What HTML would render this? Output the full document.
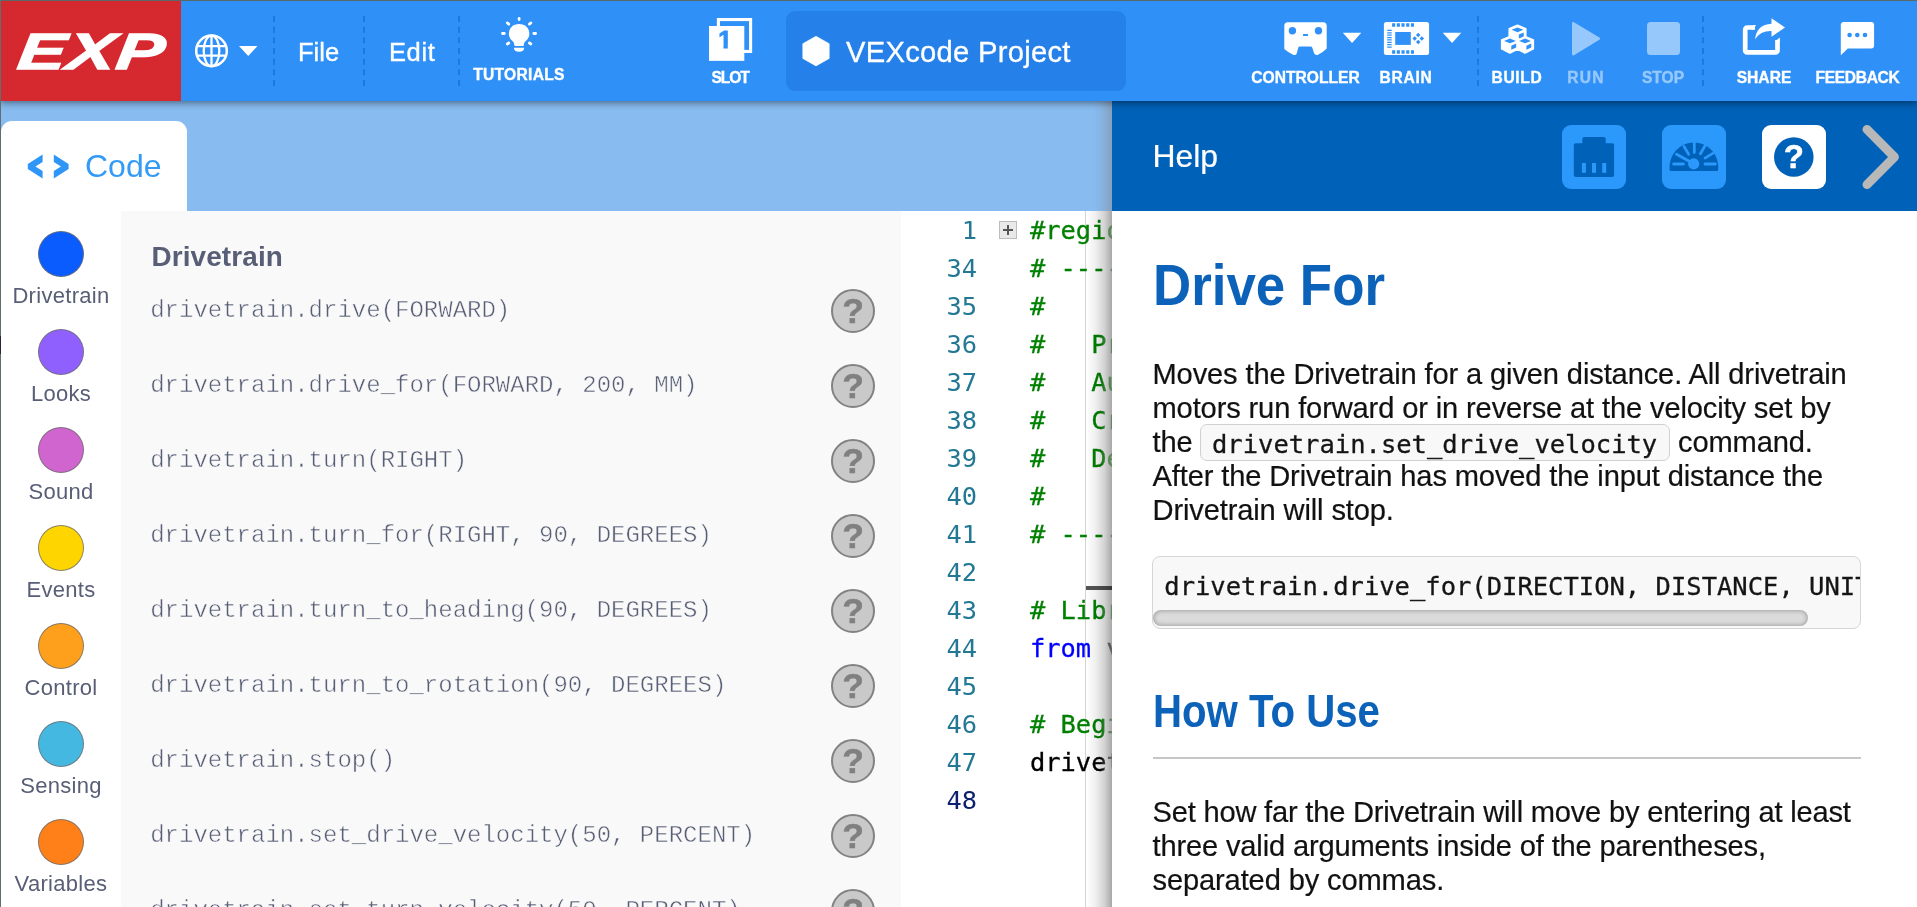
<!DOCTYPE html>
<html lang="en">
<head>
<meta charset="utf-8">
<title>VEXcode EXP</title>
<style>
*{box-sizing:border-box;margin:0;padding:0}
html,body{width:1917px;height:907px;overflow:hidden;background:#fff}
body{font-family:"Liberation Sans",sans-serif;position:relative}
#app{position:absolute;left:0;top:0;width:1917px;height:907px;overflow:hidden;will-change:transform}
.abs{position:absolute}
/* ---------- header ---------- */
#band{left:0;top:101px;width:1917px;height:110px;background:#88bcf0}
#header{left:0;top:0;width:1917px;height:101px;background:#2f91f7;box-shadow:0 2px 7px rgba(0,0,0,.45);z-index:20}
#logo{left:0;top:0;width:181px;height:101px;background:#d6282f}
.sep{width:0;top:16px;height:70px;border-left:2px dashed #1c79e4}
.hlabel{color:#fff;font-weight:bold;font-size:15.6px;white-space:nowrap;text-align:center;line-height:16px;margin-top:.5px;-webkit-text-stroke:.35px #fff}
.hmenu{-webkit-text-stroke-width:.35px;color:#fff;font-size:25.5px;white-space:nowrap;line-height:30px;margin-top:1px}
.dim{opacity:.5}
#proj{left:786px;top:11px;width:340px;height:80px;border-radius:9px;background:#2580ea}
#projname{-webkit-text-stroke-width:.3px;left:846px;top:34.700px;color:#fff;font-size:29.2px;line-height:34px;white-space:nowrap;letter-spacing:.27px}
/* ---------- left: tab, categories, flyout ---------- */
#tab{left:1px;top:121px;width:186px;height:100px;background:#fff;border-radius:11px 11px 0 0}
#tabtxt{left:85px;top:148px;color:#339bf5;font-size:32px;line-height:36px}
#cats{left:0px;top:211px;width:120px;height:700px;background:#fff}
.cat{left:0;width:122px;text-align:center}
.dot{width:46px;height:46px;border-radius:50%;border:1px solid rgba(110,110,110,.8);margin:0 auto}
.catl{color:#575e75;font-size:22px;line-height:24px;margin-top:7px;white-space:nowrap;letter-spacing:.3px}
#fly{left:121px;top:211px;width:780px;height:700px;background:#f9f9f9}
#flyh{left:151.500px;top:240px;color:#575e75;font-weight:bold;font-size:27.9px;line-height:34px;letter-spacing:.12px}
.cmd{left:150.200px;font-family:"Liberation Mono",monospace;font-size:24px;line-height:30px;color:#575e75;-webkit-text-stroke:.5px #f9f9f9;white-space:pre}
.q{left:831px;width:44px;height:44px;border-radius:50%;background:#c9c9c9;border:2.5px solid #828282;color:#808080;font-weight:bold;font-size:35.5px;line-height:41px;text-align:center;-webkit-text-stroke:.5px #808080}
/* ---------- editor ---------- */
#ed{left:901px;top:211px;width:212px;height:700px;background:#fff;overflow:hidden}
.ln{left:0;width:76px;text-align:right;font-family:"DejaVu Sans Mono",monospace;font-size:25.4px;line-height:38px;color:#237893;white-space:pre}
.cl{left:129px;font-family:"DejaVu Sans Mono",monospace;font-size:25.4px;line-height:38px;color:#000;white-space:pre;-webkit-text-stroke-width:.3px}
.cm{color:#008000}.kw{color:#0000ff}
/* ---------- help ---------- */
#helpshadow{left:1086px;top:211px;width:26px;height:700px;background:linear-gradient(to right,rgba(0,0,0,0),rgba(0,0,0,.06) 35%,rgba(0,0,0,.17) 70%,rgba(0,0,0,.34))}
#help{left:1112px;top:101px;width:805px;height:810px;background:#fff}
#hh{left:0;top:0;width:805px;height:110px;background:#0061b8}
#hht{-webkit-text-stroke-width:.2px;left:40.5px;top:35.500px;color:#fff;font-size:31.9px;line-height:38px}
.hb{top:24px;width:64px;height:64px;border-radius:9px;background:#2b99fc}
.h1{color:#0b62b8;font-weight:bold;white-space:nowrap;transform-origin:0 50%}
.p{left:40.5px;color:#111;-webkit-text-stroke-width:.2px;font-size:29.1px;line-height:34px;white-space:nowrap;letter-spacing:-.135px}
code{font-family:"DejaVu Sans Mono",monospace;-webkit-text-stroke-width:.3px}
</style>
</head>
<body>
<div id="app">
<div class="abs" id="band"></div>

<!-- tab + categories + flyout -->
<div class="abs" id="tab"></div>
<svg class="abs" style="left:25.5px;top:151px" width="46" height="32" viewBox="24 150 46 32" fill="#2f96f8"><path d="M40.600 153.600v7.300l-7.200 4.600 7.200 4.600v7.300l-14.800-9.400v-5z"/><path d="M51.800 153.600v7.300l7.200 4.600-7.200 4.600v7.300l14.800-9.400v-5z"/></svg>
<div class="abs" id="tabtxt">Code</div>
<div class="abs" id="cats">
<div class="abs cat" style="top:20px"><div class="dot" style="background:#0b5cff"></div><div class="catl">Drivetrain</div></div>
<div class="abs cat" style="top:118px"><div class="dot" style="background:#9060ff"></div><div class="catl">Looks</div></div>
<div class="abs cat" style="top:216px"><div class="dot" style="background:#d065cf"></div><div class="catl">Sound</div></div>
<div class="abs cat" style="top:314px"><div class="dot" style="background:#ffd500"></div><div class="catl">Events</div></div>
<div class="abs cat" style="top:412px"><div class="dot" style="background:#ffa01c"></div><div class="catl">Control</div></div>
<div class="abs cat" style="top:510px"><div class="dot" style="background:#45b8e2"></div><div class="catl">Sensing</div></div>
<div class="abs cat" style="top:608px"><div class="dot" style="background:#ff8019"></div><div class="catl">Variables</div></div>
</div>
<div class="abs" id="fly"></div>
<div class="abs" id="flyh">Drivetrain</div>
<div class="abs cmd" style="top:296px">drivetrain.drive(FORWARD)</div><div class="abs q" style="top:289px">?</div>
<div class="abs cmd" style="top:371px">drivetrain.drive_for(FORWARD, 200, MM)</div><div class="abs q" style="top:364px">?</div>
<div class="abs cmd" style="top:446px">drivetrain.turn(RIGHT)</div><div class="abs q" style="top:439px">?</div>
<div class="abs cmd" style="top:521px">drivetrain.turn_for(RIGHT, 90, DEGREES)</div><div class="abs q" style="top:514px">?</div>
<div class="abs cmd" style="top:596px">drivetrain.turn_to_heading(90, DEGREES)</div><div class="abs q" style="top:589px">?</div>
<div class="abs cmd" style="top:671px">drivetrain.turn_to_rotation(90, DEGREES)</div><div class="abs q" style="top:664px">?</div>
<div class="abs cmd" style="top:746px">drivetrain.stop()</div><div class="abs q" style="top:739px">?</div>
<div class="abs cmd" style="top:821px">drivetrain.set_drive_velocity(50, PERCENT)</div><div class="abs q" style="top:814px">?</div>
<div class="abs cmd" style="top:896px">drivetrain.set_turn_velocity(50, PERCENT)</div><div class="abs q" style="top:889px">?</div>

<div class="abs" id="ed">
<div class="abs" style="left:184.300px;top:0;width:1.200px;height:700px;background:#d4d4d4"></div>
<div class="abs ln" style="top:0px">1</div><div class="abs cl" style="top:0px"><span class="cm">#region VEXcode Generated Robot Configuration</span></div>
<div class="abs ln" style="top:38px">34</div><div class="abs cl" style="top:38px"><span class="cm"># ------------------------------------------</span></div>
<div class="abs ln" style="top:76px">35</div><div class="abs cl" style="top:76px"><span class="cm">#</span></div>
<div class="abs ln" style="top:114px">36</div><div class="abs cl" style="top:114px"><span class="cm">#   Project:      VEXcode Project</span></div>
<div class="abs ln" style="top:152px">37</div><div class="abs cl" style="top:152px"><span class="cm">#   Author:       VEX</span></div>
<div class="abs ln" style="top:190px">38</div><div class="abs cl" style="top:190px"><span class="cm">#   Created:</span></div>
<div class="abs ln" style="top:228px">39</div><div class="abs cl" style="top:228px"><span class="cm">#   Description:  VEXcode EXP Python Project</span></div>
<div class="abs ln" style="top:266px">40</div><div class="abs cl" style="top:266px"><span class="cm">#</span></div>
<div class="abs ln" style="top:304px">41</div><div class="abs cl" style="top:304px"><span class="cm"># ------------------------------------------</span></div>
<div class="abs ln" style="top:342px">42</div><div class="abs cl" style="top:342px"></div>
<div class="abs ln" style="top:380px">43</div><div class="abs cl" style="top:380px"><span class="cm"># Library imports</span></div>
<div class="abs ln" style="top:418px">44</div><div class="abs cl" style="top:418px"><span class="kw">from</span> vex <span class="kw">import</span> *</div>
<div class="abs ln" style="top:456px">45</div><div class="abs cl" style="top:456px"></div>
<div class="abs ln" style="top:494px">46</div><div class="abs cl" style="top:494px"><span class="cm"># Begin project code</span></div>
<div class="abs ln" style="top:532px">47</div><div class="abs cl" style="top:532px">drivetrain.drive_for(FORWARD, 200, MM)</div>
<div class="abs ln" style="top:570px;color:#0b216f">48</div><div class="abs cl" style="top:570px"></div>
<div class="abs" style="left:98px;top:10px;width:18px;height:18px;border:1.500px solid #bcbcbc;background:#e9e9e9"></div><div class="abs" style="left:102px;top:18.200px;width:10px;height:1.600px;background:#555"></div><div class="abs" style="left:106.200px;top:14px;width:1.600px;height:10px;background:#555"></div>
<div class="abs" style="left:185px;top:375px;width:30px;height:4px;background:#555"></div>
</div>
<div class="abs" style="left:1086px;top:211px;width:26px;height:700px;background:linear-gradient(to right,rgba(255,255,255,0) 55%,rgba(255,255,255,.6))"></div>
<div class="abs" style="left:1086px;top:586px;width:26px;height:4px;background:#555"></div>
<div class="abs" id="helpshadow"></div>
<div class="abs" style="left:1094px;top:101px;width:18px;height:110px;background:linear-gradient(to right,rgba(128,128,128,0),rgba(128,128,128,.12) 40%,rgba(128,128,128,.46))"></div>
<div class="abs" id="help">
<div class="abs" id="hh"><div class="abs" id="hht">Help</div>
  <div class="abs hb" style="left:450px">
    <svg class="abs" style="left:0;top:0" width="64" height="64" viewBox="1562 125 64 64" fill="#0061b8"><rect x="1582.300" y="137" width="23.400" height="10" rx="2"/><rect x="1573.800" y="143.300" width="40.300" height="33.600" rx="2"/><g fill="#2b99fc"><rect x="1581.900" y="163" width="4" height="9.800"/><rect x="1592" y="163" width="4" height="9.800"/><rect x="1602.200" y="163" width="4" height="9.800"/></g></svg>
  </div>
  <div class="abs hb" style="left:550px">
    <svg class="abs" style="left:0;top:0" width="64" height="64" viewBox="1662 125 64 64"><path d="M1671 171.100q-1.200 0-1.400-1.400a24.400 25 0 1 1 48.600 0q-.2 1.400-1.400 1.400z" fill="#0061b8"/><g stroke="#2b99fc" stroke-width="2.800" stroke-linecap="round" fill="none"><path d="M1694.300 142.300v10.200M1684 146.400l4.700 8M1705.200 145.500l-4.800 8.200M1712.800 153.400l-7.800 4.700M1673.600 164h9.800M1705 164h10.400"/><path d="M1676.600 154.200l17 9.600" stroke-width="3"/></g><circle cx="1693.700" cy="163.900" r="5.600" fill="#2b99fc"/></svg>
  </div>
  <div class="abs hb" style="left:650px;background:#fff">
    <svg class="abs" style="left:0;top:0" width="64" height="64" viewBox="1762 125 64 64"><circle cx="1793.800" cy="157" r="19.800" fill="#0061b8"/><text x="1793.900" y="168.300" text-anchor="middle" font-family="Liberation Sans, sans-serif" font-weight="bold" font-size="33" fill="#fff" stroke="#fff" stroke-width=".5">?</text></svg>
  </div>
  <svg class="abs" style="left:740px;top:14px" width="60" height="84" viewBox="1852 115 60 84"><path d="M1867 129.400l27.400 27.600-27.400 27.600" fill="none" stroke="#b8b8b8" stroke-width="9" stroke-linecap="round" stroke-linejoin="round"/></svg>
</div>
<div class="abs h1" id="t1" style="left:40.7px;top:151px;font-size:57.500px;line-height:66px;transform:scaleX(.919)">Drive For</div>
<div class="abs p" id="p1" style="top:256px">Moves the Drivetrain for a given distance. All drivetrain</div>
<div class="abs p" id="p2" style="top:290px">motors run forward or in reverse at the velocity set by</div>
<div class="abs p" id="p3" style="top:324px">the</div>
<div class="abs" id="ic" style="left:88.400px;top:323.400px;width:469.600px;height:36.300px;border:1.700px solid #d0d0d0;border-radius:7px;background:#f8f8f8"></div>
<div class="abs" id="ict" style="left:100px;top:326px;font-size:25.500px;line-height:35px;color:#151515;white-space:pre"><code>drivetrain.set_drive_velocity</code></div>
<div class="abs p" id="p3b" style="top:324px;left:566px">command.</div>
<div class="abs p" id="p4" style="top:358px">After the Drivetrain has moved the input distance the</div>
<div class="abs p" id="p5" style="top:392px">Drivetrain will stop.</div>
<div class="abs" id="cb" style="left:40px;top:455px;width:709px;height:73px;border:1.700px solid #d6d6d6;border-radius:8px;background:#f8f8f8;overflow:hidden">
  <div class="abs" id="cbt" style="left:11.300px;top:11.500px;font-size:25.500px;line-height:34px;color:#151515;white-space:pre"><code>drivetrain.drive_for(DIRECTION, DISTANCE, UNITS)</code></div>
  <div class="abs" style="left:.300px;top:53.300px;width:655px;height:15.700px;border-radius:8px;background:#dbdbdb;box-shadow:inset 0 0 4px 1px rgba(0,0,0,.26)"></div>
</div>
<div class="abs h1" id="t2" style="left:40.6px;top:583.5px;font-size:45.500px;line-height:54px;transform:scaleX(.883)">How To Use</div>
<div class="abs" style="left:41px;top:656px;width:708px;height:2px;background:#c6c6c6"></div>
<div class="abs p" id="p6" style="top:694px;letter-spacing:-.205px">Set how far the Drivetrain will move by entering at least</div>
<div class="abs p" id="p7" style="top:728px;letter-spacing:-.16px">three valid arguments inside of the parentheses,</div>
<div class="abs p" id="p8" style="top:762px">separated by commas.</div>
</div>

<div class="abs" style="left:0;top:0;width:1917px;height:1px;background:#5b6868;z-index:40"></div>
<div class="abs" style="left:0;top:0;width:1.100px;height:907px;background:#606e6d;z-index:40"></div>
<div class="abs" style="left:0;top:336px;width:1px;height:18px;background:#26263a;z-index:41"></div>
<div class="abs" id="header">
  <div class="abs" id="logo">
    <svg class="abs" style="left:0;top:0" width="181" height="101" viewBox="0 0 181 101"><text x="0" y="0" transform="translate(15.900,69) skewX(-7) scale(1.418,1)" font-family="Liberation Sans, sans-serif" font-weight="bold" font-style="italic" font-size="51" fill="#fff" stroke="#fff" stroke-width="1.300" letter-spacing=".8">EXP</text></svg>
  </div>
  <!-- globe -->
  <svg class="abs" style="left:192px;top:32px" width="70" height="38" viewBox="192 32 70 38" fill="none" stroke="#fff" stroke-width="2.500">
    <circle cx="211.500" cy="50.900" r="15.300"/>
    <ellipse cx="211.500" cy="50.900" rx="7.800" ry="15.300" stroke-width="2.300"/>
    <path d="M211.500 35.600v30.600M197.300 46.100h28.400M197.300 55.700h28.400" stroke-width="2.300"/>
    <path d="M239 46h18.500l-9.250 9.900z" fill="#fff" stroke="none"/>
  </svg>
  <div class="abs sep" style="left:273px"></div>
  <div class="abs hmenu" style="left:298px;top:36px">File</div>
  <div class="abs sep" style="left:363px"></div>
  <div class="abs hmenu" style="left:389px;top:36px;letter-spacing:.6px">Edit</div>
  <div class="abs sep" style="left:458px"></div>
  <!-- bulb -->
  <svg class="abs" style="left:498px;top:14px" width="42" height="42" viewBox="498 14 42 42" fill="#fff" stroke="none">
    <path d="M519.100 23.900a10.050 9.700 0 0 0-6.400 17.300c1.100 1 1.500 2 1.500 3.200a1.500 1.500 0 0 0 1.500 1.600h6.800a1.500 1.500 0 0 0 1.500-1.600c0-1.200.4-2.200 1.500-3.200A10.050 9.700 0 0 0 519.100 23.900z"/>
    <path d="M513.900 47.700h10.300q0 4.100-5.150 4.100t-5.150-4.100z"/>
    <g stroke="#fff" stroke-width="2.800" stroke-linecap="round"><path d="M519.100 18.500v1.100M507.300 22.900l1.500 1.200M530.900 22.900l-1.500 1.200M502.500 33.500h1.800M533.800 33.500h1.800M507.300 44l1.500-1M530.900 44l-1.500-1"/></g>
  </svg>
  <div class="abs hlabel" style="left:459px;top:66px;width:120px;letter-spacing:0.3px">TUTORIALS</div>
  <!-- slot -->
  <svg class="abs" style="left:706px;top:16px" width="50" height="48" viewBox="706 16 50 48">
    <rect x="718.400" y="19.550" width="32.200" height="31.900" fill="none" stroke="#fff" stroke-width="3.100"/>
    <rect x="709" y="26" width="35.300" height="34.850" fill="#fff"/>
    <text x="718.200" y="48.400" font-family="Liberation Sans, sans-serif" font-weight="bold" font-size="24.500" fill="#2f91f7" stroke="#2f91f7" stroke-width=".8">1</text>
    <rect x="716" y="44.500" width="7.450" height="6" fill="#fff"/><rect x="727.800" y="44.500" width="7" height="6" fill="#fff"/>
  </svg>
  <div class="abs hlabel" style="left:690px;top:69px;width:80px;letter-spacing:-1.1px">SLOT</div>
  <div class="abs" id="proj"></div>
  <svg class="abs" style="left:800px;top:34px" width="32" height="34" viewBox="800 34 32 34"><path d="M816 36.200l13.200 7.450v14.800l-13.200 7.450-13.200-7.450v-14.800z" fill="#fff" stroke="#fff" stroke-width=".6" stroke-linejoin="round"/></svg>
  <div class="abs" id="projname">VEXcode Project</div>
  <!-- controller -->
  <svg class="abs" style="left:1280px;top:18px" width="90" height="42" viewBox="1280 18 90 42" fill="#fff">
    <path d="M1287.800 22.200H1323.200Q1326.700 22.200 1326.700 25.700V48.600Q1322.500 53 1317.600 55Q1315 55.600 1314 53L1312.300 47.800Q1312 46.500 1310.500 46.500H1300Q1298.500 46.500 1298.200 47.800L1296.800 53.200Q1296 55.700 1293.600 54.900Q1288.500 52.800 1284.300 49V25.700Q1284.300 22.200 1287.800 22.200Z"/>
    <circle cx="1292.400" cy="30.800" r="3.700" fill="#2f91f7"/><circle cx="1318.500" cy="30.800" r="3.700" fill="#2f91f7"/>
    <rect x="1303" y="34.100" width="5" height="1.900" rx=".6" fill="#2f91f7"/>
    <path d="M1342.800 32.700h18.500l-9.250 10.300z"/>
  </svg>
  <div class="abs hlabel" style="left:1245px;top:69px;width:121px">CONTROLLER</div>
  <!-- brain -->
  <svg class="abs" style="left:1380px;top:18px" width="90" height="42" viewBox="1380 18 90 42" fill="#fff">
    <rect x="1383.900" y="21.900" width="45.200" height="33.200" rx="2.500"/>
    <g fill="#2f91f7"><rect x="1395.200" y="32" width="15.600" height="12.900"/><path d="M1392.1 23.300h3.100v3.500h-3.100zM1396.8 23.300h3.100v3.500h-3.100zM1401.5 23.300h3.100v3.500h-3.100zM1406.2 23.300h3.100v3.500h-3.100zM1410.9 23.300h3.100v3.500h-3.100z"/><path d="M1392.1 50.300h3.100v3.500h-3.100zM1396.8 50.300h3.100v3.500h-3.100zM1401.5 50.300h3.100v3.500h-3.100zM1406.2 50.300h3.100v3.500h-3.100zM1410.9 50.300h3.100v3.500h-3.100z"/><path d="M1387.200 29.80h4.500v1.250h-4.500zM1387.200 32.17h4.500v1.250h-4.500zM1387.200 34.54h4.500v1.250h-4.500zM1387.200 36.91h4.500v1.250h-4.500zM1387.200 39.28h4.500v1.250h-4.500zM1387.200 41.65h4.500v1.250h-4.500zM1387.200 44.02h4.500v1.250h-4.500zM1387.200 46.39h4.500v1.250h-4.500z"/><path d="M1418.2 32.85l2.25 2.25l-2.25 2.25l-2.25 -2.25zM1414.7 36.25l2.25 2.25l-2.25 2.25l-2.25 -2.25zM1421.8 36.25l2.25 2.25l-2.25 2.25l-2.25 -2.25zM1418.2 39.65l2.25 2.25l-2.25 2.25l-2.25 -2.25z"/></g>
    <path d="M1442.800 32.700h18.500l-9.250 10.300z"/>
  </svg>
  <div class="abs hlabel" style="left:1366px;top:69px;width:80px;letter-spacing:0.7px">BRAIN</div>
  <div class="abs sep" style="left:1477px"></div>
  <!-- build -->
  <svg class="abs" style="left:1498px;top:21px" width="40" height="36" viewBox="1498 21 40 36">
    <g transform="translate(1517.500 38.500) scale(.955) translate(-1517.500 -38.500)"><path d="M1517.5 24.7l8.700 3.500v9.300l-8.700 4.500l-8.700 -4.500v-9.300zM1509.6 36.4l8.700 3.500v9.300l-8.700 4.500l-8.700 -4.500v-9.300zM1525.4 36.4l8.700 3.500v9.300l-8.700 4.500l-8.700 -4.500v-9.300z" fill="#fff" stroke="#fff" stroke-width="1.600" stroke-linejoin="round"/>
    <path d="M1511.3 29.4l6.200 -2.500l6.200 2.500l-6.200 2.500zM1518.9 34.3l5.100 -2.200v4.200l-5.100 2.300zM1503.4 41.1l6.200 -2.500l6.200 2.500l-6.200 2.500zM1511.0 46.0l5.100 -2.200v4.200l-5.100 2.300zM1519.2 41.1l6.200 -2.500l6.200 2.500l-6.200 2.500zM1526.8 46.0l5.100 -2.200v4.200l-5.100 2.300z" fill="#2f91f7"/>
  </g></svg>
  <div class="abs hlabel" style="left:1477px;top:69px;width:80px;letter-spacing:0.65px">BUILD</div>
  <!-- run / stop -->
  <svg class="abs dim" style="left:1570px;top:20px" width="34" height="38" viewBox="1570 20 34 38"><path d="M1573.300 23.300l25.400 15.400-25.400 15.400z" fill="#fff" stroke="#fff" stroke-width="2.600" stroke-linejoin="round"/></svg>
  <div class="abs hlabel dim" style="left:1546px;top:69px;width:80px;letter-spacing:1.3px">RUN</div>
  <svg class="abs dim" style="left:1645px;top:20px" width="38" height="38" viewBox="1645 20 38 38"><rect x="1647" y="22" width="33" height="33" rx="3.500" fill="#fff"/></svg>
  <div class="abs hlabel dim" style="left:1623px;top:69px;width:80px">STOP</div>
  <div class="abs sep" style="left:1702px"></div>
  <!-- share -->
  <svg class="abs" style="left:1740px;top:16px" width="48" height="42" viewBox="1740 16 48 42" fill="none" stroke="#fff">
    <path d="M1755 27.500h-7.800a2 2 0 0 0-2 2v20.900a2 2 0 0 0 2 2h28.300a2 2 0 0 0 2-2v-10.500" stroke-width="4.700"/>
    <path d="M1753.300 25.150h2.900l-3.300 4.700h-1zM1775.150 41.200l4.700-3.600v4z" fill="#fff" stroke="none"/>
    <path d="M1771.500 18.300l13.500 9.300-13.500 9.200v-5.700c-7.200-.2-12.800 2.500-16.500 8.400 1-9.900 6.700-15.200 16.500-15.700z" fill="#fff" stroke="none"/>
  </svg>
  <div class="abs hlabel" style="left:1724px;top:69px;width:80px">SHARE</div>
  <!-- feedback -->
  <svg class="abs" style="left:1838px;top:20px" width="40" height="38" viewBox="1838 20 40 38" fill="#fff">
    <path d="M1843.800 22.100h27.300a3 3 0 0 1 3 3v20.300a3 3 0 0 1-3 3h-23.300l-7 6.800v-30.100a3 3 0 0 1 3-3z"/>
    <g fill="#2f91f7"><circle cx="1849.600" cy="35" r="2.300"/><circle cx="1857.300" cy="35" r="2.300"/><circle cx="1865" cy="35" r="2.300"/></g>
  </svg>
  <div class="abs hlabel" style="left:1797px;top:69px;width:121px;letter-spacing:-0.35px">FEEDBACK</div>
</div>
</div>
</body>
</html>
